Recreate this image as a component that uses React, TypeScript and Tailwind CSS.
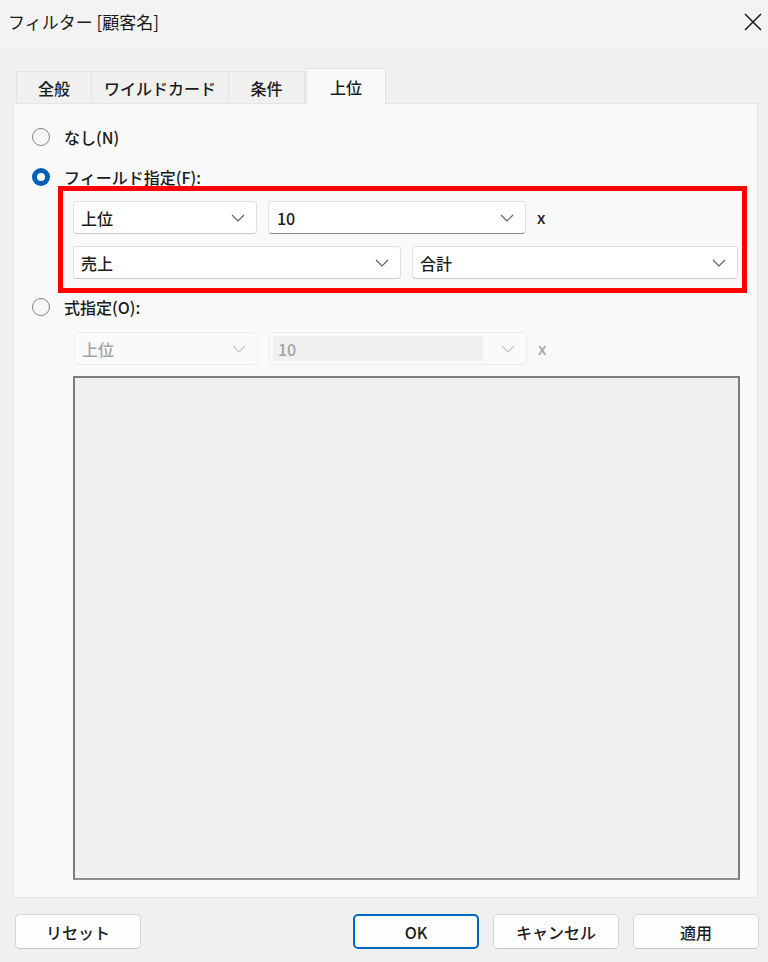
import React from "react";

const font = { fontFamily: '"Noto Sans CJK JP", "Noto Sans", sans-serif' };

function Chevron({ disabled = false }: { disabled?: boolean }) {
  return (
    <svg width="14" height="8" viewBox="0 0 14 8" fill="none">
      <path d="M1 1l6 6 6-6" stroke={disabled ? "#c4c4c4" : "#5f5f5f"} strokeWidth="1.2" />
    </svg>
  );
}

function Radio({ checked = false }: { checked?: boolean }) {
  if (checked) {
    return (
      <span className="w-[18px] h-[18px] rounded-full bg-[#005fb8] flex items-center justify-center">
        <span className="w-[8px] h-[8px] rounded-full bg-white" />
      </span>
    );
  }
  return <span className="w-[18px] h-[18px] rounded-full border-[1.5px] border-[#858585] bg-[#f7f7f7]" />;
}

function Select({ label, width, disabled = false }: { label: string; width: string; disabled?: boolean }) {
  return (
    <div
      className={`${width} h-[33px] rounded-[4px] border flex items-center justify-between pl-[7px] pr-[11px] ${
        disabled
          ? "border-[#ececec] bg-[#fafafa] text-[#a3a3a3]"
          : "border-[#e0e0e0] border-b-[#c9c9c9] bg-white text-[#1b1b1b]"
      }`}
    >
      <span className="text-[16px] leading-none">{label}</span>
      <Chevron disabled={disabled} />
    </div>
  );
}

function Combo({ disabled = false }: { disabled?: boolean }) {
  return (
    <div
      className={`w-[258px] h-[33px] rounded-[4px] border flex items-center pr-[11px] ${
        disabled ? "border-[#ececec] bg-[#fafafa] pl-[3px]" : "border-[#e0e0e0] border-b-[#8a8a8a] bg-white pl-[8px]"
      }`}
    >
      {disabled ? (
        <div className="flex-1 h-[25px] bg-[#f0f0f0] flex items-center pl-[5px] text-[16px] text-[#a3a3a3] mr-[18px]">10</div>
      ) : (
        <span className="flex-1 text-[16px] text-[#1b1b1b]">10</span>
      )}
      <Chevron disabled={disabled} />
    </div>
  );
}

function Button({ label, primary = false }: { label: string; primary?: boolean }) {
  return (
    <button
      className={`w-[126px] h-[35px] rounded-[5px] bg-[#fdfdfd] text-[16px] text-[#1b1b1b] flex items-center justify-center ${
        primary ? "border-2 border-[#0067c0]" : "border border-[#d5d5d5] border-b-[#c4c4c4]"
      }`}
    >
      {label}
    </button>
  );
}

export default function App() {
  const tabs = [
    { label: "全般", w: "w-[76px]" },
    { label: "ワイルドカード", w: "w-[138px]" },
    { label: "条件", w: "w-[77px]" },
  ];
  return (
    <div className="w-[768px] h-[962px] bg-[#f0f0f0] text-[#1b1b1b] font-medium flex flex-col" style={font}>
      <div className="h-[48px] bg-[#f3f3f3] flex items-center justify-between pl-[8px] pr-[5px]">
        <span className="text-[17px] text-[#1a1a1a] font-normal -mt-[4px]">フィルター [顧客名]</span>
        <svg width="20" height="20" viewBox="0 0 20 20" className="-mt-[5px]">
          <path d="M2 2l16 16M18 2L2 18" stroke="#1f1f1f" strokeWidth="1.6" />
        </svg>
      </div>

      <div className="pt-[20px] pl-[16px] flex items-end">
        {tabs.map((t) => (
          <div
            key={t.label}
            className={`${t.w} h-[32px] border border-[#e2e2e2] border-b-0 bg-[#f0f0f0] flex items-center justify-center text-[16px] -mr-px`}
          >
            {t.label}
          </div>
        ))}
        <div className="w-[80px] h-[36px] ml-[2px] border border-[#e2e2e2] border-b-0 bg-[#f9f9f9] flex items-center justify-center text-[16px] relative -mb-px z-10">
          上位
        </div>
      </div>

      <div className="ml-[13px] w-[745px] h-[795px] border border-[#e5e5e5] bg-[#f9f9f9] flex flex-col">
        <div className="mt-[24px] ml-[18px] h-[18px] flex items-center gap-[14px]">
          <Radio />
          <span className="text-[16px]">なし(N)</span>
        </div>
        <div className="mt-[22px] ml-[18px] h-[18px] flex items-center gap-[14px]">
          <Radio checked />
          <span className="text-[16px]">フィールド指定(F):</span>
        </div>

        <div className="ml-[44px] w-[689px] h-[107px] border-[5px] border-[#ff0000] pt-[10px] pl-[10px] flex flex-col gap-[12px]">
          <div className="flex items-center">
            <Select label="上位" width="w-[184px]" />
            <div className="ml-[11px]">
              <Combo />
            </div>
            <span className="ml-[11px] text-[16px] -mt-[2px]">x</span>
          </div>
          <div className="flex items-center gap-[11px]">
            <Select label="売上" width="w-[328px]" />
            <Select label="合計" width="w-[326px]" />
          </div>
        </div>

        <div className="mt-[5px] ml-[18px] h-[18px] flex items-center gap-[14px]">
          <Radio />
          <span className="text-[16px]">式指定(O):</span>
        </div>

        <div className="mt-[16px] ml-[60px] flex items-center">
          <Select label="上位" width="w-[184px]" disabled />
          <div className="ml-[11px]">
            <Combo disabled />
          </div>
          <span className="ml-[11px] text-[16px] text-[#a3a3a3] -mt-[2px]">x</span>
        </div>

        <div className="mt-[11px] ml-[59px] w-[667px] h-[504px] border-2 border-[#7d7d7d] border-b-[#8f8f8f] bg-[#f0f0f0]" />
      </div>

      <div className="mt-[16px] flex items-center pl-[15px]">
        <Button label="リセット" />
        <div className="ml-[212px] flex gap-[14px]">
          <Button label="OK" primary />
          <Button label="キャンセル" />
          <Button label="適用" />
        </div>
      </div>
    </div>
  );
}
